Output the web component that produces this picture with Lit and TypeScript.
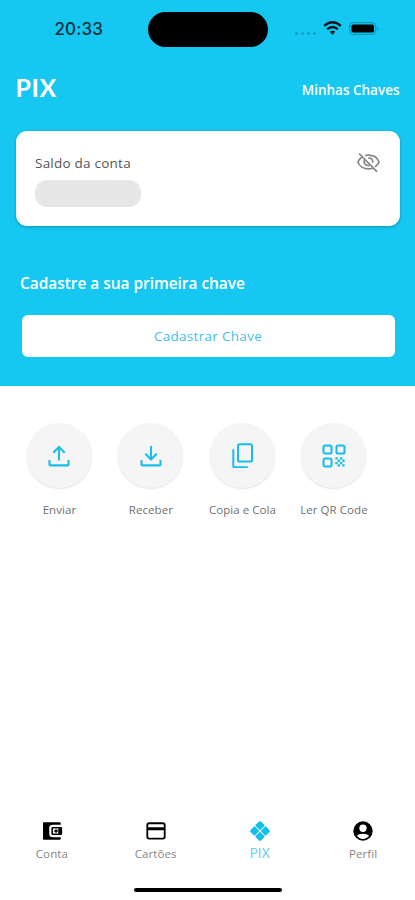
import { LitElement, html, css, svg } from "lit";
import { customElement } from "lit/decorators.js";

const icon = (cls: string, body: unknown, box = "0 0 24 24") =>
  html`<svg class=${cls} viewBox=${box} aria-hidden="true">${body}</svg>`;

const eyeOff = svg`<g fill="none" stroke="currentColor" stroke-width="1.700" stroke-linecap="round">
  <path d="M4.500 4.500C2.800 5.700 1.600 7.200.9 9c1.500 4 5.800 6.900 10.600 6.900 1.500 0 2.900-.2 4.200-.7"/>
  <path d="M9 2.400q1.200-.2 2.500-.2c4.800 0 9 2.800 10.500 6.800-.7 1.800-1.900 3.300-3.500 4.400"/>
  <path d="M7.300 7.200c-.9 3 1.300 5.500 4.500 5.400M11.800 5c2.400.1 3.900 1.700 3.900 3.900"/>
  <path d="M2.600 1 19.600 18.300"/></g>`;

const send = svg`<g fill="none" stroke="currentColor" stroke-width="2.100">
  <path d="M11 15.500V2.200M5.300 7.700 11 2l5.700 5.700"/><path d="M1.500 15v4.400q0 1 1 1h17q1 0 1-1V15"/></g>`;
const receive = svg`<g fill="none" stroke="currentColor" stroke-width="2.100">
  <path d="M11 .9v13.300M5.300 8.700l5.700 5.700 5.700-5.700"/><path d="M1.500 15v4.400q0 1 1 1h17q1 0 1-1V15"/></g>`;
const copy = svg`<g fill="none" stroke="currentColor" stroke-width="2">
  <rect x="6" y="1.300" width="14" height="17.200" rx="1.600"/><path d="M1.300 6.200v17q0 1.100 1.100 1.100H15.800"/></g>`;
const qr = svg`<g fill="none" stroke="currentColor" stroke-width="2.100">
  <rect x="1.500" y="1.500" width="8" height="8" rx="1.600"/><rect x="14.500" y="1.500" width="8" height="8" rx="1.600"/>
  <rect x="1.500" y="14.500" width="8" height="8" rx="1.600"/></g>
  <path fill="currentColor" d="M13.300 13.300h2.300v2.300h-2.300zM18 13.300h2.300v2.300H18zM15.600 15.600H18V18h-2.400zM20.300 15.600h2.300V18h-2.300zM13.300 18h2.300v2.300h-2.300zM18 18h2.300v2.300H18zM15.600 20.300H18v2.300h-2.400zM20.300 20.300h2.300v2.300h-2.300z"/>`;
const wallet = svg`<path fill="currentColor" d="M3 2.500h17.500q1 0 1 1v1.800h-8.500q-4 0-4 3.200v7q0 3.200 4 3.200h8.500v1.800q0 1-1 1H3q-.8 0-.8-.8V3.300q0-.8.800-.8z"/>
  <rect x="12.200" y="8.500" width="10" height="7" rx=".6" fill="none" stroke="currentColor" stroke-width="1.700"/>
  <path d="M14.400 12h4M16.400 10v4" stroke="currentColor" stroke-width="1.500"/><path d="M18.800 9h3v6h-3z" fill="currentColor"/>`;
const card = svg`<rect x="2.500" y="3.500" width="19" height="16.800" rx="2" fill="none" stroke="currentColor" stroke-width="2"/><path d="M3 7.900h18v3.300H3z" fill="currentColor"/>`;
const pix = svg`<g fill="currentColor"><path d="M12 1.300q.8 0 1.400.6l3.500 3.600v1L12 11.200 7.100 6.500v-1l3.500-3.600q.6-.6 1.400-.6zM12 22.700q-.8 0-1.400-.6l-3.500-3.600v-1L12 12.800l4.900 4.700v1l-3.500 3.600q-.6.6-1.400.6zM1.300 12q0-.8.6-1.400l3.600-3.500h1L11.200 12l-4.700 4.900h-1l-3.600-3.500q-.6-.6-.6-1.400zM22.700 12q0-.8-.6-1.400l-3.600-3.500h-1L12.800 12l4.700 4.900h1l3.600-3.500q.6-.6.6-1.400z"/></g>`;
const profile = svg`<path fill="currentColor" fill-rule="evenodd" d="M12 1.400a10.600 10.600 0 1 0 0 21.200 10.600 10.600 0 0 0 0-21.200zM12 5a4 4 0 1 1 0 8 4 4 0 0 1 0-8zM12 20.800c-2.900 0-5.200-1.300-6.600-3.500 2-3.100 11.200-3.100 13.200 0-1.400 2.200-3.700 3.500-6.600 3.500z"/>`;

const actions = [
  { name: "Enviar", art: send, cls: "glyph", box: "0 0 22 22" },
  { name: "Receber", art: receive, cls: "glyph", box: "0 0 22 22" },
  { name: "Copia e Cola", art: copy, cls: "glyph copy", box: "0 0 21.300 25.500" },
  { name: "Ler QR Code", art: qr, cls: "glyph qr", box: "0 0 24 24" },
];
const tabs = [
  { name: "Conta", art: wallet, active: false },
  { name: "Cartões", art: card, active: false },
  { name: "PIX", art: pix, active: true },
  { name: "Perfil", art: profile, active: false },
];

@customElement("app-root")
export class AppRoot extends LitElement {
  static styles = css`
    :host { display: flex; flex-direction: column; height: 900px; background: #fff; overflow: hidden;
      font-family: "Open Sans", "Noto Sans", sans-serif; color: #707070; }
    * { box-sizing: border-box; }
    svg { display: block; flex: none; }
    button { font: inherit; border: 0; padding: 0; background: none; color: inherit; }
    .hero { height: 385.500px; background: #16c7f1; color: #fff; flex: none; }
    .status { height: 58px; display: flex; align-items: center; padding-left: 54.500px; color: #06303b; }
    .time { width: 93.500px; font: 500 17px/20px Inter, sans-serif; letter-spacing: 0.100px; }
    .island { width: 120px; height: 35px; border-radius: 18px; background: #000; }
    .signal { width: 21px; height: 3px; margin: 8px 0 0 27px; color: #1193b4; }
    .wifi { width: 19px; height: 14px; margin: -2px 0 0 7px; color: #001216; }
    .battery { width: 31px; height: 13px; margin: -1px 0 0 7px; }
    .top { height: 72.500px; display: flex; justify-content: space-between; padding: 12px 15.500px 0 15.500px; }
    .title { margin: 0; font: 700 25px/34px Lato, sans-serif; letter-spacing: 0.600px; }
    .keys { font-size: 13.500px; line-height: 18px; font-weight: 600; margin-top: 11px; }
    .balance { height: 95px; margin: 0 15px 0 15.500px; border-radius: 11px; background: #fff;
      box-shadow: 0 1px 3px rgba(0, 50, 70, .35); padding: 20px 20px 0 19.500px;
      display: flex; justify-content: space-between; }
    .caption { font-size: 13.500px; line-height: 24px; color: #555; letter-spacing: 0.230px; }
    .hidden { width: 106px; height: 27px; border-radius: 12px; background: #e7e7e7; margin-top: 5px; }
    .eye { width: 23px; height: 19px; margin-top: 2px; color: #858585; }
    .prompt { margin: 45px 20px 0; font-size: 15.500px; line-height: 24px; font-weight: 600; letter-spacing: -0.050px; }
    .register { display: block; width: 373px; height: 42px; margin: 20px 0 0 21.500px; border-radius: 6px;
      background: #fff; color: #3fc1e8; font-size: 13.500px; letter-spacing: 0.300px; }
    .actions { display: grid; grid-template-columns: repeat(4, 91.500px); margin: 37.500px 0 0 13.700px; }
    .action { display: flex; flex-direction: column; align-items: center; gap: 12px;
      font-size: 11.500px; line-height: 20px; white-space: nowrap; letter-spacing: 0.060px; }
    .disc { width: 65px; height: 65px; border-radius: 50%; background: #f5f5f5;
      box-shadow: 0 1px 2px rgba(0, 0, 0, .11); display: grid; place-items: center; color: #17bfe8; }
    .glyph { width: 22px; height: 22px; }
    .copy { width: 21.300px; height: 25.500px; }
    .qr { width: 24px; height: 24px; }
    .tabs { display: grid; grid-template-columns: repeat(4, 1fr); margin-top: auto; height: 69px; }
    .tab { display: flex; flex-direction: column; align-items: center; gap: 0.500px;
      font-size: 11.500px; line-height: 20px; letter-spacing: 0.100px; color: #858585; }
    .tab svg { width: 22px; height: 24px; color: #000; }
    .active { font: 400 13px/20px Lato, sans-serif; color: #6fd1f2; gap: 0; padding-left: 1px; }
    .active svg { color: #12bfea; }
    .home { flex: none; width: 148px; height: 4px; border-radius: 2px; background: #000; margin: 0 auto 8px 133.500px; }
  `;

  render() {
    return html`
      <header class="hero">
        <div class="status">
          <span class="time">20:33</span>
          <div class="island"></div>
          ${icon("signal", svg`<g fill="currentColor"><circle cx="1.500" cy="1.500" r="1.200"/><circle cx="7.500" cy="1.500" r="1.200"/><circle cx="13.500" cy="1.500" r="1.200"/><circle cx="19.500" cy="1.500" r="1.200"/></g>`, "0 0 21 3")}
          ${icon("wifi", svg`<g fill="none" stroke="currentColor" stroke-width="2.300"><path d="M1.200 4.800q8.300-7 16.600 0M4.200 8.200q5.300-4.400 10.600 0"/></g><path d="M6.800 10.800q2.700-1.900 5.400 0L9.500 13.700z" fill="currentColor"/>`, "0 0 19 14")}
          ${icon("battery", svg`<rect x=".7" y=".7" width="26" height="11.600" rx="3.500" fill="none" stroke="#0c8fae"/><rect x="2.500" y="2.400" width="22.500" height="8.200" rx="1.800"/><path d="M28.200 4.300q2.200 2.200 0 4.400z" fill="#0c8fae"/>`, "0 0 31 13")}
        </div>
        <div class="top">
          <h1 class="title">PIX</h1>
          <span class="keys">Minhas Chaves</span>
        </div>
        <section class="balance">
          <div>
            <div class="caption">Saldo da conta</div>
            <div class="hidden"></div>
          </div>
          ${icon("eye", eyeOff, "0 0 23 19")}
        </section>
        <div class="prompt">Cadastre a sua primeira chave</div>
        <button class="register">Cadastrar Chave</button>
      </header>
      <section class="actions">
        ${actions.map((a) => html`<button class="action"><span class="disc">${icon(a.cls, a.art, a.box)}</span><span>${a.name}</span></button>`)}
      </section>
      <nav class="tabs">
        ${tabs.map((t) => html`<button class="tab ${t.active ? "active" : ""}">${icon("", t.art)}<span>${t.name}</span></button>`)}
      </nav>
      <div class="home"></div>
    `;
  }
}
